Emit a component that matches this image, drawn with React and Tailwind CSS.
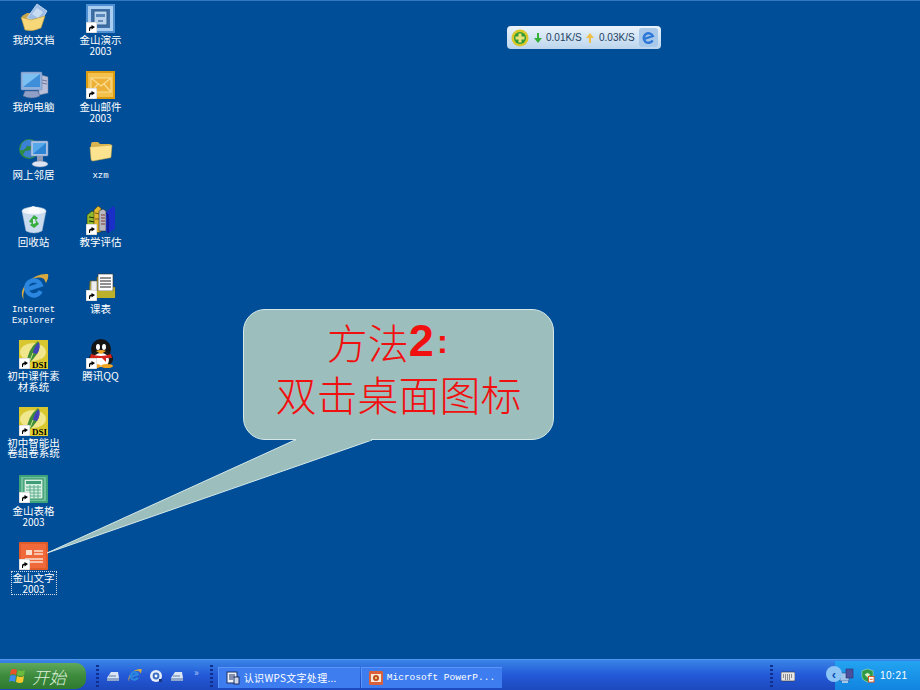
import React from 'react';

const Shortcut = () => (
  <svg viewBox="0 0 11 11" className="absolute left-0 bottom-0 w-[11px] h-[11px]">
    <rect width="11" height="11" fill="#fff" stroke="#888" strokeWidth="0.5" />
    <path d="M3 9 L3 6.5 Q3 4.5 5.5 4.5 L5.5 3 L9 5 L5.5 7.5 L5.5 6 Q4 6 4 9 Z" fill="#000" />
  </svg>
);

const DocsFolder = () => (
  <svg viewBox="0 0 30 30" className="w-[30px] h-[30px]">
    <path d="M3 13 L8 10 L22 10 L22 20 L6 27 Z" fill="#c9a650" />
    <path d="M8 15 L18 1 L28 8 L21 20 Z" fill="#9dbde6" stroke="#d3e3f5" strokeWidth="0.8" />
    <path d="M13 11 L18 5 L24 9 L19 15 Z" fill="#c7dbf2" />
    <path d="M2 14 L12 17 L26 13 L22 25 Q14 29 6 27 Z" fill="#f6d878" stroke="#b9993f" strokeWidth="0.6" />
  </svg>
);

const PresIcon = () => (
  <div className="relative w-[29px] h-[29px]">
    <svg viewBox="0 0 29 29" className="w-full h-full">
      <rect width="29" height="29" fill="#4d8fd0" />
      <rect x="2" y="2" width="25" height="25" fill="#a8cdf0" />
      <rect x="5" y="5" width="19" height="19" fill="#3f6fa5" />
      <rect x="8" y="7" width="13" height="14" fill="#b9d3ec" stroke="#2f5e92" />
      <path d="M10 10 H19 V13 H10 Z" fill="#5b88ba" />
      <path d="M12 17 H17" stroke="#2f5e92" strokeWidth="1.2" />
    </svg>
    <Shortcut />
  </div>
);

const MailIcon = () => (
  <div className="relative w-[29px] h-[28px]">
    <svg viewBox="0 0 29 28" className="w-full h-full">
      <rect width="29" height="28" fill="#dc9c12" />
      <rect x="2" y="2" width="25" height="24" fill="#f4c24c" />
      <rect x="5" y="7" width="20" height="14" fill="#eeb138" stroke="#f9dd93" />
      <path d="M5 7 L15 15 L25 7 M5 21 L12 13 M25 21 L18 13" fill="none" stroke="#f9dd93" strokeWidth="1.2" />
    </svg>
    <Shortcut />
  </div>
);

const Computer = () => (
  <svg viewBox="0 0 30 30" className="w-[30px] h-[30px]">
    <path d="M19 4 L29 7 L29 23 L20 25 Z" fill="#b9bfd8" stroke="#7d84a4" strokeWidth="0.5" />
    <path d="M23 10 L28 11 M23 13 L28 14" stroke="#6f7699" />
    <rect x="2" y="2" width="21" height="18" rx="1" fill="#8fb0dc" stroke="#6b82b3" strokeWidth="0.5" />
    <rect x="4" y="4" width="17" height="13" fill="#7cc0f2" />
    <path d="M4 17 L21 4 L21 17 Z" fill="#3f8ed9" />
    <path d="M6 21 H19 L21 26 Q13 30 4 26 Z" fill="#8f9fc6" stroke="#5b6a94" strokeWidth="0.5" />
  </svg>
);

const Network = () => (
  <svg viewBox="0 0 30 30" className="w-[30px] h-[30px]">
    <circle cx="10" cy="11" r="10" fill="#2d8a43" />
    <path d="M3 5 Q9 -1 16 4 Q12 9 8 8 Q6 13 1 12 Z" fill="#3b82d6" />
    <path d="M4 17 Q10 22 15 18 L13 12 L6 13 Z" fill="#3b7fcf" />
    <rect x="12" y="3" width="17" height="15" rx="1" fill="#a9c2e4" stroke="#7d8db3" strokeWidth="0.5" />
    <rect x="14" y="5" width="13" height="11" fill="#56a8ea" />
    <path d="M14 16 L27 5 L27 16 Z" fill="#2d83d3" />
    <rect x="18" y="18" width="6" height="5" fill="#8d99b5" />
    <ellipse cx="21" cy="26" rx="8" ry="3" fill="#dfe5f0" stroke="#7d8db3" strokeWidth="0.5" />
  </svg>
);

const Folder = () => (
  <svg viewBox="0 0 24 24" className="w-[24px] h-[24px] -mt-[3px]">
    <path d="M2 5 Q2 3 4 3 L9 3 L11 5 L21 5 Q22 5 22 7 L22 18 L4 21 Q2 21 2 19 Z" fill="#d9b44e" />
    <path d="M1 8 L23 6 L22 18 Q22 19 20 19 L4 22 Q2 22 2 20 Z" fill="#fbe38f" stroke="#c9a640" strokeWidth="0.5" />
  </svg>
);

const Books = () => (
  <div className="relative w-[30px] h-[30px]">
    <svg viewBox="0 0 30 30" className="w-full h-full">
      <path d="M1 10 L6 6 L10 8 L10 28 L1 26 Z" fill="#8fb82c" stroke="#1d2b14" strokeWidth="0.5" />
      <path d="M3 12 L9 13 M3 16 L9 17" stroke="#1d2b14" />
      <path d="M8 5 L12 1 L15 3 L15 27 L8 28 Z" fill="#e0b832" stroke="#3a2c08" strokeWidth="0.5" />
      <path d="M9 8 L14 9 M9 14 L14 14" stroke="#7c5a16" />
      <path d="M13 6 L17 4 L20 6 L20 26 L13 26 Z" fill="#b9b9c2" stroke="#222" strokeWidth="0.5" />
      <path d="M15 10 H19 M15 13 H19 M15 16 H19 M15 19 H19" stroke="#7a3a32" />
      <path d="M20 8 L27 1 L29 3 L29 24 L22 28 L20 26 Z" fill="#1a2fc8" />
      <path d="M20 8 L22 10 L22 28" fill="none" stroke="#0b1470" />
    </svg>
    <Shortcut />
  </div>
);

const RecycleBin = () => (
  <svg viewBox="0 0 30 30" className="w-[30px] h-[30px]">
    <path d="M3 6 L7 26 Q15 30 23 26 L27 6 Z" fill="#c9dbee" stroke="#a9bdd4" strokeWidth="0.5" />
    <ellipse cx="15" cy="6" rx="12" ry="4" fill="#eef4fa" stroke="#b5c6da" strokeWidth="0.5" />
    <path d="M10 3 L14 1 L20 3 L21 8 L9 8 Z" fill="#f8fafc" />
    <path d="M11 15 L15 10 L19 13 L17 15 L20 19 L15 23 L11 20 L13 18 L10 17 Z" fill="#37ae3d" />
    <path d="M14 14 L16 14 L17 18 L14 19 Z" fill="#d6e4f2" />
  </svg>
);

// blue e with the gold swoosh round it
const IeIcon = ({ size = 30 }) => (
  <svg viewBox="0 0 30 30" style={{ width: size, height: size }}>
    <path d="M5 28 Q-1 20 9 10 Q18 1 29 2 Q30 6 27 11 L25 7 Q18 3 11 10 Q2 20 5 28 Z" fill="#d8a93f" />
    <g transform="rotate(-18 15 15)">
      <path d="M8 15 H22 A7.5 7.5 0 1 0 20 21" stroke="#2a86de" strokeWidth="4.4" fill="none" />
    </g>
  </svg>
);

const DsiIcon = () => (
  <div className="relative w-[29px] h-[29px]">
    <svg viewBox="0 0 29 29" className="w-full h-full">
      <rect width="29" height="29" fill="#d8c72e" />
      <ellipse cx="14" cy="12" rx="13" ry="9" fill="#f0e68c" />
      <path d="M8 23 Q8 10 19 1 Q22 7 18 14 Q14 20 10 23 Z" fill="#3f8d37" />
      <path d="M14 13 Q15 6 20 2 Q22 8 18 14 Z" fill="#4342b8" />
      <path d="M10 23 L14 13" stroke="#c8e58a" />
      <rect x="9" y="22" width="20" height="7" fill="#e3cf30" />
    </svg>
    <span className="absolute right-[1px] bottom-[-1px] text-[9px] leading-[9px] font-bold text-black font-['Liberation_Serif',serif]">DSI</span>
    <Shortcut />
  </div>
);

const ScheduleIcon = () => (
  <div className="relative w-[30px] h-[28px]">
    <svg viewBox="0 0 30 28" className="w-full h-full">
      <path d="M4 8 H11 V4 H26 V14 H29 V24 H3 Z" fill="#d9c83a" stroke="#59551c" strokeWidth="0.6" />
      <rect x="12" y="1" width="15" height="17" fill="#fff" stroke="#333" strokeWidth="0.6" />
      <path d="M14 5 H25 M14 8 H25 M14 11 H25 M14 14 H25" stroke="#222" strokeWidth="1.1" />
      <rect x="5" y="8" width="6" height="10" fill="#eee" stroke="#555" strokeWidth="0.5" />
      <rect x="2" y="18" width="27" height="7" fill="#bdb02a" />
    </svg>
    <Shortcut />
  </div>
);

const QqIcon = () => (
  <div className="relative w-[30px] h-[30px]">
    <svg viewBox="0 0 30 30" className="w-full h-full">
      <ellipse cx="15" cy="10" rx="10" ry="10" fill="#141414" />
      <ellipse cx="15" cy="20" rx="12" ry="8" fill="#1c1c1c" />
      <ellipse cx="15" cy="21" rx="8" ry="7" fill="#fff" />
      <ellipse cx="12" cy="8" rx="2" ry="3" fill="#fff" />
      <ellipse cx="18" cy="8" rx="2" ry="3" fill="#fff" />
      <path d="M10 12 Q15 10 20 12 L15 15 Z" fill="#f0a520" />
      <path d="M5 15 Q15 19 25 15 L26 19 L20 19 L20 23 L16 19 L4 19 Z" fill="#d6231c" />
      <ellipse cx="9" cy="27" rx="6" ry="2" fill="#f0a520" />
      <ellipse cx="21" cy="27" rx="6" ry="2" fill="#f0a520" />
    </svg>
    <Shortcut />
  </div>
);

const SheetIcon = () => (
  <div className="relative w-[29px] h-[28px]">
    <svg viewBox="0 0 29 28" className="w-full h-full">
      <rect width="29" height="28" rx="1" fill="#3ea37a" />
      <rect x="2" y="2" width="25" height="24" fill="#6fc29c" />
      <rect x="5" y="4" width="19" height="20" fill="#d6efe0" stroke="#2c8d65" />
      <rect x="7" y="6" width="15" height="3" fill="#3f9d78" />
      <path d="M7 12 H22 M7 15 H22 M7 18 H22 M7 21 H22 M11 10 V23 M15 10 V23 M19 10 V23" stroke="#5cae8c" />
    </svg>
    <Shortcut />
  </div>
);

const WriterIcon = () => (
  <div className="relative w-[29px] h-[28px]">
    <svg viewBox="0 0 29 28" className="w-full h-full">
      <rect width="29" height="28" rx="1" fill="#e05b2a" />
      <rect x="2" y="2" width="25" height="24" fill="#f0693a" />
      <rect x="7" y="8" width="6" height="5" fill="#fbe0d0" />
      <path d="M15 9 H24 M15 12 H24 M6 17 H24 M6 20 H24" stroke="#fbe0d0" strokeWidth="1.4" />
    </svg>
    <Shortcut />
  </div>
);

const col1 = [
  { icon: <DocsFolder />, lines: ['我的文档'] },
  { icon: <Computer />, lines: ['我的电脑'] },
  { icon: <Network />, lines: ['网上邻居'] },
  { icon: <RecycleBin />, lines: ['回收站'] },
  { icon: <IeIcon />, lines: ['Internet', 'Explorer'], mono: true },
  { icon: <DsiIcon />, lines: ['初中课件素', '材系统'] },
  { icon: <DsiIcon />, lines: ['初中智能出', '卷组卷系统'], tight: true },
  { icon: <SheetIcon />, lines: ['金山表格', '2003'] },
  { icon: <WriterIcon />, lines: ['金山文字', '2003'], focused: true },
];

const col2 = [
  { icon: <PresIcon />, lines: ['金山演示', '2003'] },
  { icon: <MailIcon />, lines: ['金山邮件', '2003'] },
  { icon: <Folder />, lines: ['xzm'], mono: true },
  { icon: <Books />, lines: ['教学评估'] },
  { icon: <ScheduleIcon />, lines: ['课表'] },
  { icon: <QqIcon />, lines: ['腾讯QQ'] },
];

const DesktopIcon = ({ item }) => (
  <div className="h-[67.25px] flex flex-col items-center pt-[2px]">
    <div className="h-[30px] flex items-center justify-center">{item.icon}</div>
    <div
      className={`px-[1px] text-center text-white whitespace-nowrap ${
        item.focused ? 'outline outline-1 outline-dotted outline-white/80' : ''
      } ${
        item.mono
          ? "mt-[3px] font-['Liberation_Mono',monospace] text-[9px] leading-[11px]"
          : item.tight
          ? 'mt-[1px] text-[10.5px] leading-[10.5px]'
          : 'mt-[1px] text-[10.5px] leading-[11px]'
      }`}
    >
      {item.lines.map((line) =>
        line === '2003' ? (
          <div key={line} className="text-[10px] leading-[11px]">{line}</div>
        ) : (
          <div key={line}>{line}</div>
        )
      )}
    </div>
  </div>
);

const Grip = () => (
  <div className="w-[3px] h-[22px] bg-[repeating-linear-gradient(to_bottom,#0f2f8c_0,#0f2f8c_2px,transparent_2px,transparent_4px)]" />
);

const XpFlag = () => (
  <svg viewBox="0 0 18 18" className="w-[18px] h-[18px]">
    <path d="M2 3 Q5 1 8 3 L7 8 Q4 6 1 8 Z" fill="#e8532a" />
    <path d="M9 3 Q12 5 16 3 L15 8 Q12 10 8 8 Z" fill="#6cbb3c" />
    <path d="M1 9 Q4 7 7 9 L6 15 Q3 13 0 15 Z" fill="#3f8de8" />
    <path d="M8 9 Q12 11 15 9 L14 15 Q11 17 7 15 Z" fill="#f5c82c" />
  </svg>
);

const QuickDrive = () => (
  <svg viewBox="0 0 14 14" className="w-[14px] h-[14px]">
    <path d="M1 9 L5 3 L12 3 L13 9 Z" fill="#dbe6f5" />
    <path d="M1 9 H13 V12 H1 Z" fill="#8ea6c9" />
    <path d="M3 7 H10" stroke="#5f7da8" />
  </svg>
);

const QuickMedia = () => (
  <svg viewBox="0 0 14 14" className="w-[14px] h-[14px]">
    <circle cx="7" cy="7" r="6" fill="#e8eef8" />
    <circle cx="7" cy="7" r="3.4" fill="#3a6fc4" />
    <circle cx="7" cy="7" r="1.4" fill="#fff" />
    <rect x="10" y="10" width="3" height="3" fill="#17357f" />
  </svg>
);

const PptThumb = () => (
  <svg viewBox="0 0 14 14" className="w-[14px] h-[14px]">
    <rect width="14" height="14" rx="1" fill="#d9623c" />
    <rect x="2" y="3" width="10" height="8" fill="#f7e8d8" />
    <circle cx="7" cy="7" r="3" fill="#c2481f" />
    <circle cx="7" cy="7" r="1.2" fill="#f2c25a" />
  </svg>
);

const WordThumb = () => (
  <svg viewBox="0 0 14 14" className="w-[14px] h-[14px]">
    <rect x="1" y="1" width="10" height="11" fill="#eef2f8" stroke="#1d2f66" />
    <path d="M3 4 H9 M3 6 H9 M3 8 H7" stroke="#1d2f66" />
    <rect x="8" y="6" width="5" height="7" fill="#cfd8e8" stroke="#1d2f66" />
  </svg>
);

const TaskButton = ({ icon, width, children }) => (
  <div className={`${width} h-[21px] flex items-center gap-[4px] pl-[7px] bg-[#3d7df0] border-l border-t border-[#5b95f5] text-white whitespace-nowrap overflow-hidden`}>
    {icon}
    {children}
  </div>
);

export default function App() {
  return (
    <div className="relative w-[920px] h-[690px] overflow-hidden flex flex-col bg-[#004e98] border-t border-[#2f78c0] font-['Noto_Sans_CJK_SC','Noto_Sans',sans-serif]">
      <div className="flex-1 flex items-start">
        <div className="w-[67px]">
          {col1.map((item) => <DesktopIcon key={item.lines[0]} item={item} />)}
        </div>
        <div className="w-[67px]">
          {col2.map((item) => <DesktopIcon key={item.lines[0]} item={item} />)}
        </div>
      </div>

      {/* network speed widget */}
      <div className="absolute left-[507px] top-[25px] w-[154px] h-[23px] rounded-[4px] bg-gradient-to-b from-[#eaf3fb] to-[#bcd5ec] flex items-center pl-[4px] text-[10px] text-[#22405f] font-['Liberation_Sans',sans-serif]">
        <svg viewBox="0 0 18 18" className="w-[18px] h-[18px]">
          <circle cx="9" cy="9" r="8.5" fill="#d9c72c" />
          <circle cx="9" cy="9" r="6" fill="#2f9a35" />
          <path d="M7.5 4.5 H10.5 V7.5 H13.5 V10.5 H10.5 V13.5 H7.5 V10.5 H4.5 V7.5 H7.5 Z" fill="#e9e27a" />
        </svg>
        <svg viewBox="0 0 8 10" className="ml-[5px] w-[8px] h-[10px]">
          <path d="M3 0 H5 V5 H8 L4 10 L0 5 H3 Z" fill="#35b03a" />
        </svg>
        <span className="ml-[4px] w-[34px]">0.01K/S</span>
        <svg viewBox="0 0 8 10" className="ml-[6px] w-[8px] h-[10px]">
          <path d="M3 10 H5 V5 H8 L4 0 L0 5 H3 Z" fill="#eec04a" />
        </svg>
        <span className="ml-[5px] w-[34px]">0.03K/S</span>
        <div className="ml-[6px] w-[19px] h-[19px] rounded-[3px] bg-[#a9c9ea] flex items-center justify-center">
          <svg viewBox="0 0 30 30" className="w-[15px] h-[15px]">
            <g transform="rotate(-18 15 15)">
              <path d="M6 15 H24 A9.5 9.5 0 1 0 21 23" stroke="#2f78d8" strokeWidth="5" fill="none" />
            </g>
          </svg>
        </div>
      </div>

      {/* callout */}
      <svg viewBox="0 0 920 690" className="absolute inset-0 w-[920px] h-[690px] pointer-events-none">
        <path d="M295 439 L47 552 L372 439 Z" fill="#9cbfbd" stroke="#d5e8e8" strokeWidth="1" />
      </svg>
      <div className="absolute left-[243px] top-[308px] w-[311px] h-[131px] rounded-[22px] bg-[#9cbfbd] border border-[#d5e8e8] text-[#f01010] text-[41px] leading-[52px] font-light text-center">
        <div className="h-[52px] mt-[5px] flex items-center justify-center pr-[22px]">
          方法
          <span className="font-['Liberation_Sans',sans-serif] font-bold text-[45px]">2</span>
          <span className="ml-[3px] font-['Liberation_Sans',sans-serif] font-bold text-[34px]">:</span>
        </div>
        <div className="h-[52px]">双击桌面图标</div>
      </div>
      <svg viewBox="0 0 920 690" className="absolute inset-0 w-[920px] h-[690px] pointer-events-none">
        <path d="M296 438 L371 438 L371 440 L296 440 Z" fill="#9cbfbd" />
      </svg>

      {/* taskbar */}
      <div className="h-[31px] flex items-end bg-gradient-to-b from-[#3a84e6] via-[#2459d8] to-[#1c49bd] border-t border-[#4f97ef]">
        <div className="w-[86px] h-[26px] mb-[1px] rounded-r-[10px] bg-gradient-to-b from-[#5fa85c] via-[#3d8a3d] to-[#2f7a2f] flex items-center pl-[9px] gap-[5px]">
          <XpFlag />
          <span className="text-[#dcefd8] text-[17px] leading-none italic font-light">开始</span>
        </div>
        <div className="h-[29px] flex items-center ml-[10px] gap-[7px]">
          <Grip />
          <QuickDrive />
          <IeIcon size={15} />
          <QuickMedia />
          <QuickDrive />
          <span className="ml-[3px] text-[#a9c8f5] text-[10px] leading-none -mt-[8px]">»</span>
          <div className="ml-[4px]"><Grip /></div>
        </div>
        <div className="ml-[5px] mb-[2px] flex gap-[1px] text-[9px] leading-none">
          <TaskButton icon={<WordThumb />} width="w-[142px]">
            <span className="text-[10px] tracking-[0.3px]">认识WPS文字处理...</span>
          </TaskButton>
          <TaskButton icon={<PptThumb />} width="w-[141px]">
            <span className="font-['Liberation_Mono',monospace] text-[9.5px]">Microsoft PowerP...</span>
          </TaskButton>
        </div>
        <div className="flex-1 h-[29px] flex items-center pl-[268px]">
          <Grip />
          <svg viewBox="0 0 14 12" className="ml-[8px] w-[14px] h-[12px]">
            <rect y="2" width="14" height="9" rx="1" fill="#e6e6e6" stroke="#333" strokeWidth="0.6" />
            <path d="M2 5 H12 M2 7 H12 M4 9 H10" stroke="#333" strokeDasharray="1 1" />
          </svg>
        </div>
        <div className="relative w-[85px] h-[29px] bg-gradient-to-b from-[#23a4f0] to-[#1184e0] flex items-center pl-[4px] gap-[5px]">
          <div className="absolute -left-[9px] top-[5px] w-[16px] h-[16px] rounded-full bg-[#8cc4f5] flex items-center justify-center text-[#0d4fb5] text-[13px] font-bold leading-none font-['Liberation_Sans',sans-serif]">‹</div>
          <svg viewBox="0 0 16 16" className="w-[16px] h-[16px]">
            <rect x="1" y="5" width="9" height="8" fill="#9fc6ea" stroke="#2b4b88" strokeWidth="0.6" />
            <rect x="7" y="1" width="7" height="9" fill="#4a4f9e" stroke="#2b2f6e" strokeWidth="0.6" />
            <path d="M3 14 H9" stroke="#d5dfef" strokeWidth="1.5" />
          </svg>
          <svg viewBox="0 0 16 16" className="w-[15px] h-[15px]">
            <path d="M8 1 L14 3 V9 Q14 13 8 15 Q2 13 2 9 V3 Z" fill="#2f9a45" stroke="#d8efd8" strokeWidth="0.5" />
            <path d="M5 7 L8 5 L11 7 L8 10 Z" fill="#d8efc0" />
            <rect x="9" y="9" width="6" height="6" fill="#fff" stroke="#d9541e" />
            <rect x="10.5" y="11.5" width="3" height="1" fill="#d9541e" />
          </svg>
          <span className="text-white text-[10px] tracking-[0.5px] font-['Liberation_Sans',sans-serif]">10:21</span>
        </div>
      </div>
    </div>
  );
}
